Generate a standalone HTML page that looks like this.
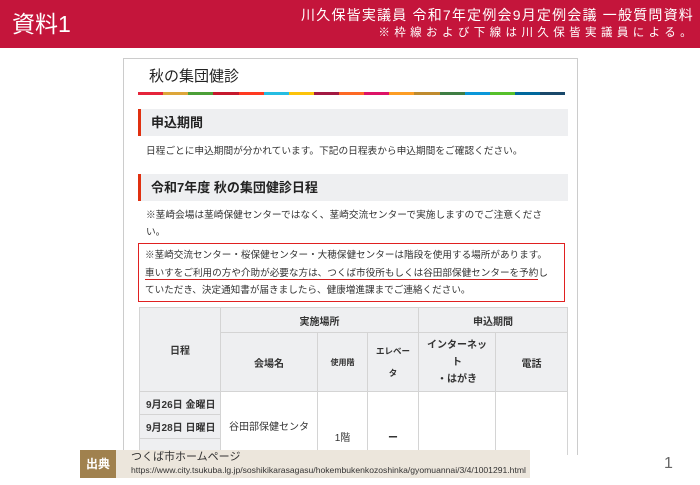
<!DOCTYPE html>
<html><head><meta charset="utf-8"><style>
*{margin:0;padding:0;box-sizing:border-box}
body{width:700px;height:485px;overflow:hidden;background:#fff;font-family:"Liberation Sans","Noto Sans CJK JP",sans-serif;position:relative;color:#333}
.hdr{position:absolute;left:0;top:0;width:700px;height:48px;background:#c4153b;color:#fff}
.hdr .t{position:absolute;left:12px;top:9px;font-size:23px;line-height:30px}
.hdr .r1{position:absolute;right:6px;top:6px;font-size:14px;line-height:18px;letter-spacing:1.2px}
.hdr .r2{position:absolute;right:4px;top:25px;font-size:11.5px;line-height:16px;letter-spacing:4.4px}
.card{position:absolute;left:123px;top:58px;width:455px;height:397px;border:1px solid #ccc;border-bottom:none;overflow:hidden}
.abs{position:absolute}
.ttl{left:25px;top:6px;font-size:15px;color:#222}
.rb{left:14px;top:33px;width:427px;height:3px;display:flex}
.rb i{flex:1}
.h{left:14px;width:430px;height:27px;background:#eeeff1;border-left:3px solid #e03010;font-size:13px;font-weight:bold;padding-left:10px;line-height:27px;color:#222}
.p{left:22px;font-size:9.7px;line-height:17px;color:#333;white-space:nowrap}
.box{left:14px;top:184px;width:427px;height:59px;border:1.5px solid #e02020;padding:3px 6px;font-size:9.6px;line-height:17.5px;white-space:nowrap}
.u{border-bottom:1.5px solid #d02020}
table{position:absolute;left:15px;top:248px;border-collapse:collapse;font-size:10px;color:#333}
td{border:1px solid #d4d4d4;text-align:center;padding:0;font-weight:bold}
.g{background:#eeeff1}
</style></head><body>
<div class="hdr"><div class="t">資料1</div><div class="r1">川久保皆実議員 令和7年定例会9月定例会議 一般質問資料</div><div class="r2">※枠線および下線は川久保皆実議員による。</div></div>
<div class="card">
<div class="abs ttl">秋の集団健診</div>
<div class="abs rb"><i style="background:#e5243b"></i><i style="background:#dda63a"></i><i style="background:#4c9f38"></i><i style="background:#c5192d"></i><i style="background:#ff3a21"></i><i style="background:#26bde2"></i><i style="background:#fcc30b"></i><i style="background:#a21942"></i><i style="background:#fd6925"></i><i style="background:#dd1367"></i><i style="background:#fd9d24"></i><i style="background:#bf8b2e"></i><i style="background:#3f7e44"></i><i style="background:#0a97d9"></i><i style="background:#56c02b"></i><i style="background:#00689d"></i><i style="background:#19486a"></i></div>
<div class="abs h" style="top:50px">申込期間</div>
<div class="abs p" style="top:84px">日程ごとに申込期間が分かれています。下記の日程表から申込期間をご確認ください。</div>
<div class="abs h" style="top:115px">令和7年度 秋の集団健診日程</div>
<div class="abs p" style="top:148px">※茎崎会場は茎崎保健センターではなく、茎崎交流センターで実施しますのでご注意くださ<br>い。</div>
<div class="abs box">※茎崎交流センター・桜保健センター・大穂保健センターは階段を使用する場所があります。<br><span class="u">車いすをご利用の方や介助が必要な方は、つくば市役所もしくは谷田部保健センターを予約</span>し<br>ていただき、決定通知書が届きましたら、健康増進課までご連絡ください。</div>
<table>
<tr style="height:25px"><td class="g" rowspan="2" style="width:81px">日程</td><td class="g" colspan="3">実施場所</td><td class="g" colspan="2">申込期間</td></tr>
<tr style="height:59px"><td class="g" style="width:97px">会場名</td><td class="g" style="width:50px;font-size:8px">使用階</td><td class="g" style="width:51px;font-size:8.5px;line-height:22px">エレベー<br>タ</td><td class="g" style="width:77px;line-height:17px">インターネッ<br>ト<br>・はがき</td><td class="g" style="width:72px">電話</td></tr>
<tr style="height:23px"><td class="g" style="text-align:left;padding-left:6px">9月26日 金曜日</td><td rowspan="3" style="font-weight:normal">谷田部保健センタ</td><td rowspan="3" style="font-weight:normal;padding-top:22px">1階</td><td rowspan="3" style="padding-top:22px">ー</td><td rowspan="3"></td><td rowspan="3"></td></tr>
<tr style="height:24px"><td class="g" style="text-align:left;padding-left:6px">9月28日 日曜日</td></tr>
<tr style="height:20px"><td class="g"></td></tr>
</table>
</div>
<div class="abs" style="left:80px;top:450px;width:450px;height:28px;background:#ece6dc"></div>
<div class="abs" style="left:80px;top:450px;width:36px;height:28px;background:#a0814e;color:#fff;font-size:12px;font-weight:bold;line-height:28px;text-align:center">出典</div>
<div class="abs" style="left:131px;top:451px;font-size:11px;line-height:13px;color:#333">つくば市ホームページ</div>
<div class="abs" style="left:131px;top:465px;font-size:8.6px;line-height:11px;color:#333">https://www.city.tsukuba.lg.jp/soshikikarasagasu/hokembukenkozoshinka/gyomuannai/3/4/1001291.html</div>
<div class="abs" style="left:664px;top:455px;font-size:16px;color:#666">1</div>
</body></html>
